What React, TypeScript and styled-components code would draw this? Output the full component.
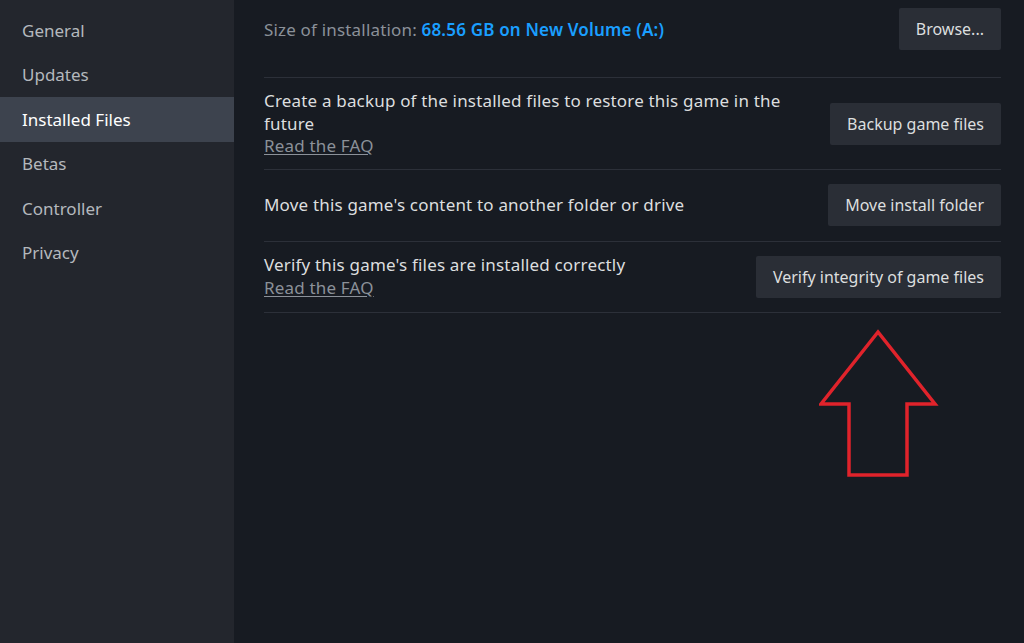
import React from "react";
import styled, { createGlobalStyle } from "styled-components";

const GlobalStyle = createGlobalStyle`
  html, body {
    margin: 0;
    padding: 0;
    background: #171b22;
    font-family: "Noto Sans", "Open Sans", Arial, sans-serif;
  }
  #root { height: 643px; }
`;

const Page = styled.div`
  display: flex;
  width: 1024px;
  height: 643px;
  overflow: hidden;
  background: #171b22;
`;

const Sidebar = styled.nav`
  width: 234px;
  flex-shrink: 0;
  background: #23262d;
  padding-top: 8px;
  display: flex;
  flex-direction: column;
`;

const NavItem = styled.div<{ $active?: boolean }>`
  height: 44.5px;
  display: flex;
  align-items: center;
  padding-left: 22px;
  font-size: 17px;
  color: ${(p) => (p.$active ? "#ffffff" : "#b4b8bd")};
  background: ${(p) => (p.$active ? "#3d434e" : "transparent")};
`;

const Main = styled.main`
  flex: 1;
  position: relative;
  padding: 8px 23px 0 30px;
`;

const Row = styled.div<{ $pad?: string }>`
  display: flex;
  align-items: center;
  justify-content: space-between;
  gap: 24px;
  padding: ${(p) => p.$pad || "14px 0"};
  border-bottom: 1px solid #2c3039;
`;

const Info = styled.div`
  display: flex;
  flex-direction: column;
  font-size: 17px;
  letter-spacing: 0.18px;
  line-height: 22.5px;
  color: #dcdedf;
  max-width: 530px;
`;

const SizeLabel = styled.span`
  font-size: 17px;
  letter-spacing: 0.18px;
  color: #8b9199;
`;

const SizeValue = styled.span`
  color: #1a9fff;
  font-weight: 600;
`;

const FaqLink = styled.a`
  color: #8b9199;
  text-decoration: underline;
  text-underline-offset: 2px;
  cursor: pointer;
`;

const Button = styled.button`
  flex-shrink: 0;
  height: 42px;
  padding: 0 17px;
  border: none;
  border-radius: 2px;
  background: #2a2e36;
  color: #dcdedf;
  font-family: inherit;
  font-size: 16px;
  cursor: pointer;
`;

const Arrow = styled.svg`
  position: absolute;
  left: 585px;
  top: 329px;
`;

const navItems = ["General", "Updates", "Installed Files", "Betas", "Controller", "Privacy"];

export default function App() {
  return (
    <>
      <GlobalStyle />
      <Page>
        <Sidebar>
          {navItems.map((n) => (
            <NavItem key={n} $active={n === "Installed Files"}>
              {n}
            </NavItem>
          ))}
        </Sidebar>
        <Main>
          <Row $pad="0 0 27px 0">
            <SizeLabel>
              Size of installation: <SizeValue>68.56 GB on New Volume (A:)</SizeValue>
            </SizeLabel>
            <Button>Browse...</Button>
          </Row>
          <Row $pad="12px 0 11px">
            <Info>
              <span>Create a backup of the installed files to restore this game in the future</span>
              <FaqLink>Read the FAQ</FaqLink>
            </Info>
            <Button>Backup game files</Button>
          </Row>
          <Row $pad="14.5px 0">
            <Info>
              <span>Move this game's content to another folder or drive</span>
            </Info>
            <Button>Move install folder</Button>
          </Row>
          <Row $pad="12.5px 0">
            <Info>
              <span>Verify this game's files are installed correctly</span>
              <FaqLink>Read the FAQ</FaqLink>
            </Info>
            <Button>Verify integrity of game files</Button>
          </Row>
          <Arrow width="120" height="150" viewBox="0 0 120 150">
            <polygon
              points="59,3 2,75 30,75 30,146 88,146 88,75 116,75"
              fill="none"
              stroke="#e0232b"
              strokeWidth="3.5"
              strokeLinejoin="miter"
            />
          </Arrow>
        </Main>
      </Page>
    </>
  );
}
